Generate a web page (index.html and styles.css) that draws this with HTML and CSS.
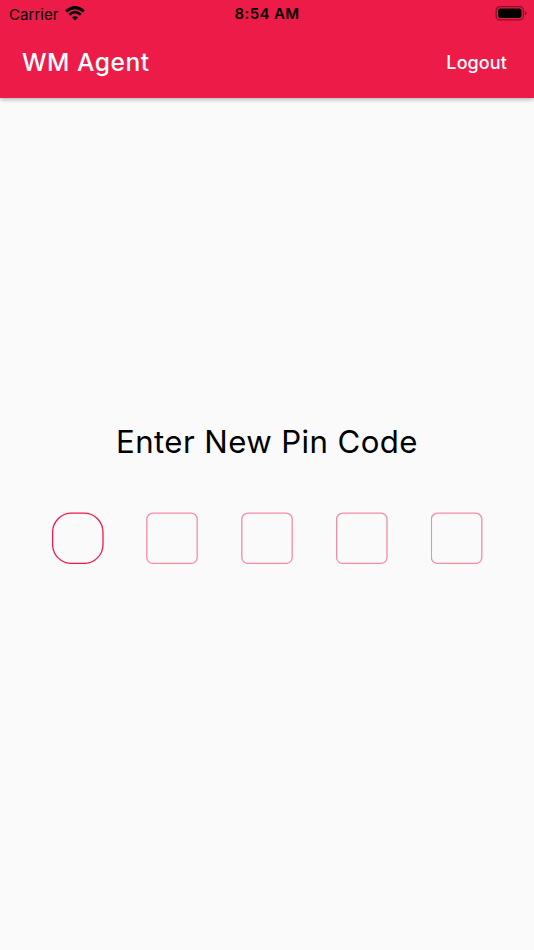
FILE: index.html
```html
<!DOCTYPE html>
<html lang="en">
<head>
  <meta charset="UTF-8">
  <meta name="viewport" content="width=device-width, initial-scale=1.0">
  <title>WM Agent</title>
  <link rel="stylesheet" href="styles.css">
</head>
<body>
  <header class="header">
    <div class="status-bar">
      <div class="carrier">
        <span>Carrier</span>
        <svg class="wifi" width="20" height="15" viewBox="0 0 20 15" fill="none" stroke="#000">
          <path d="M1.2 5.4 Q10 -2.2 18.8 5.4" stroke-width="3"/>
          <path d="M4.3 8.8 Q10 3.6 15.7 8.8" stroke-width="2.7"/>
          <path d="M10 14.6 L6.9 11.5 Q10 8.8 13.1 11.5 Z" fill="#000" stroke="none"/>
        </svg>
      </div>
      <span class="time">8:54 AM</span>
      <svg class="battery" width="32" height="15" viewBox="0 0 32 15">
        <rect x="1.2" y="0.7" width="27.2" height="13.2" rx="3.6" fill="none" stroke="#000" stroke-opacity="0.42" stroke-width="1.3"/>
        <rect x="3.1" y="2.5" width="23.4" height="9.6" rx="2"/>
        <path d="M29.9 5 Q31.5 5.8 31.5 7.3 Q31.5 8.8 29.9 9.6 Z" fill-opacity="0.5"/>
      </svg>
    </div>
    <div class="app-bar">
      <h1 class="title">WM Agent</h1>
      <a class="logout">Logout</a>
    </div>
  </header>

  <main class="content">
    <h2 class="prompt">Enter New Pin Code</h2>
    <div class="pins">
      <svg class="pin active" viewBox="0 0 52 52"><rect x="0.6" y="1.2" width="50.4" height="50.2" rx="19"/></svg>
      <svg class="pin" viewBox="0 0 52 52"><rect x="0.8" y="1.2" width="50.4" height="50.2" rx="6"/></svg>
      <svg class="pin" viewBox="0 0 52 52"><rect x="0.8" y="1.2" width="50.4" height="50.2" rx="6"/></svg>
      <svg class="pin" viewBox="0 0 52 52"><rect x="0.6" y="1.2" width="50.4" height="50.2" rx="6"/></svg>
      <svg class="pin" viewBox="0 0 52 52"><rect x="0.4" y="1.2" width="50.4" height="50.2" rx="6"/></svg>
    </div>
  </main>
</body>
</html>
```
FILE: styles.css
```css
* {
  box-sizing: border-box;
}

body {
  display: flex;
  flex-direction: column;
  min-height: 100vh;
  margin: 0;
  background-color: #fafafa;
  font-family: Inter, "Liberation Sans", sans-serif;
}

.header {
  height: 98px;
  background-color: #ed1b47;
  box-shadow: 0 1px 5px rgba(0, 0, 0, 0.35);
}

.status-bar {
  display: grid;
  grid-template-columns: 1fr auto 1fr;
  align-items: center;
  height: 27px;
  padding: 0 7px 0 9px;
  font-size: 15px;
  color: #000;
}

.carrier {
  display: flex;
  align-items: center;
  gap: 6px;
  letter-spacing: 0.05px;
}

.carrier span {
  padding-top: 1px;
}

.time {
  position: relative;
  left: -1px;
  font-weight: 600;
  font-size: 15px;
  letter-spacing: 0.35px;
}

.battery {
  justify-self: end;
}

.app-bar {
  display: flex;
  align-items: center;
  justify-content: space-between;
  height: 70px;
  padding: 0 27px 0 22px;
  color: #fff;
}

.title {
  margin: 0;
  font-size: 24.5px;
  font-weight: 500;
  line-height: 30px;
  letter-spacing: 0.55px;
}

.logout {
  font-size: 18px;
  font-weight: 500;
  letter-spacing: 0.1px;
}

.content {
  display: flex;
  flex-direction: column;
  align-items: center;
  padding-top: 324px;
}

.prompt {
  margin: 0;
  font-size: 31.2px;
  font-weight: 400;
  line-height: 40px;
  letter-spacing: 0.4px;
  white-space: nowrap;
}

.pins {
  display: flex;
  justify-content: space-between;
  width: 431px;
  margin-top: 50px;
}

.pin {
  width: 52px;
  height: 52px;
  fill: none;
  stroke: #f48da3;
  stroke-width: 1.3;
}

.pin.active {
  stroke: #ee1b48;
}
```
